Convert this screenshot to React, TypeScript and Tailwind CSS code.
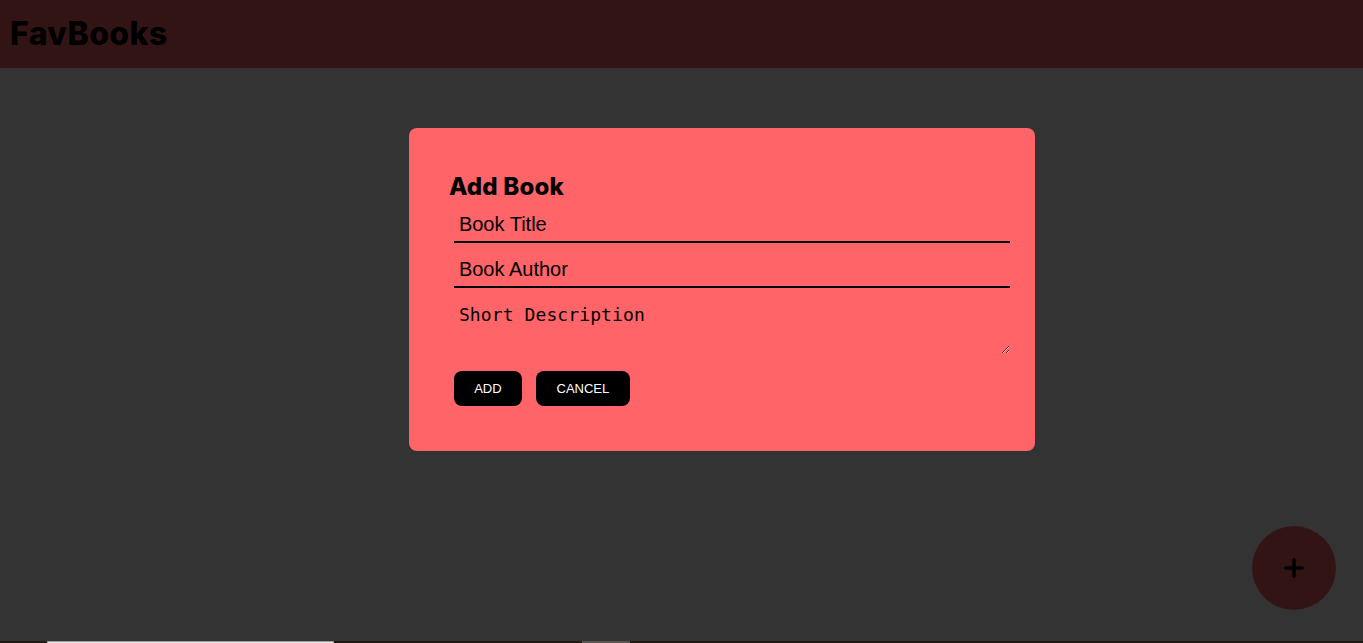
import { Plus } from "lucide-react";

function Header() {
  return (
    <header className="flex h-[68px] shrink-0 items-center bg-[#ff6666] px-[10px]">
      <h1 className="font-['Inter',sans-serif] text-[32px] font-extrabold leading-none tracking-[0.4px] text-black">
        FavBooks
      </h1>
    </header>
  );
}

function AddBookModal() {
  return (
    <div className="fixed inset-x-0 top-0 bottom-[2px] z-20 bg-black/80">
      <div className="ml-[30%] mt-[128px] w-[626px] rounded-[8px] bg-[#ff6468] pl-[40px] pr-[41px] pt-[40px] pb-[45px]">
        <h2 className="h-[37px] font-['Inter',sans-serif] text-[24px] font-extrabold leading-[37px] tracking-[0.2px] text-black">
          Add Book
        </h2>
        <div className="ml-[5px] flex w-[556px] flex-col">
          <input
            placeholder="Book Title"
            className="h-[38px] border-b-2 border-black bg-transparent px-[5px] pt-[3px] font-['Liberation_Sans',Arial,sans-serif] text-[20px] text-black outline-none placeholder:text-black"
          />
          <input
            placeholder="Book Author"
            className="mt-[7px] h-[38px] border-b-2 border-black bg-transparent px-[5px] pt-[3px] font-['Liberation_Sans',Arial,sans-serif] text-[20px] text-black outline-none placeholder:text-black"
          />
          <textarea
            placeholder="Short Description"
            className="mt-[10px] h-[56px] bg-transparent px-[5px] pt-[6px] font-['DejaVu_Sans_Mono',monospace] text-[18px] leading-[21px] tracking-[0.1px] text-black outline-none placeholder:text-black"
          />
          <div className="mt-[17px] flex gap-[14px]">
            <button className="h-[35px] w-[68px] rounded-[8px] bg-black font-['Liberation_Sans',Arial,sans-serif] text-[13px] text-white">
              ADD
            </button>
            <button className="h-[35px] w-[94px] rounded-[8px] bg-black font-['Liberation_Sans',Arial,sans-serif] text-[13px] text-white">
              CANCEL
            </button>
          </div>
        </div>
      </div>
    </div>
  );
}

export default function App() {
  return (
    <div className="flex h-[643px] flex-col overflow-hidden bg-white">
      <Header />
      <main className="flex flex-1 items-end justify-end pr-[27px] pb-[31px]">
        <button className="grid h-[84px] w-[84px] place-items-center rounded-full bg-[#ff6666] text-black">
          <Plus className="h-[28px] w-[28px]" strokeWidth={3} />
        </button>
      </main>
      {/* sliver of the page below, not covered by the overlay */}
      <div className="flex h-[2px] shrink-0 bg-[#231a14]">
        <div className="ml-[47px] w-[287px] border-x border-t border-[#9a9a9a] bg-[#e8e8e8]" />
        <div className="ml-[248px] w-[48px] bg-[#5a5550]" />
      </div>
      <AddBookModal />
    </div>
  );
}
